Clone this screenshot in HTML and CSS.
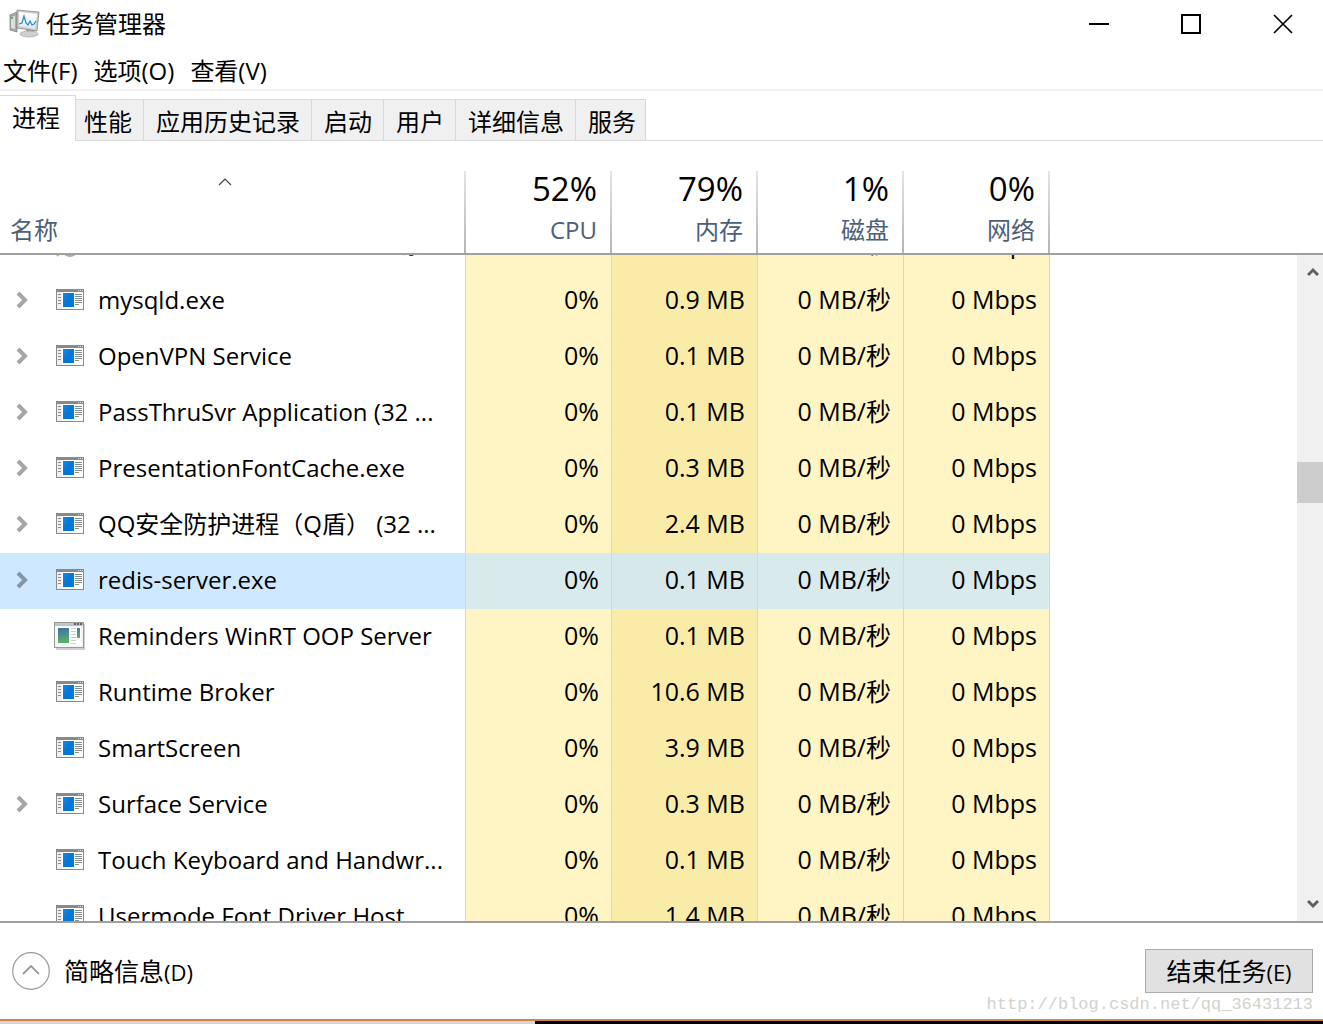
FILE: index.html
```html
<!DOCTYPE html>
<html lang="zh-CN">
<head>
<meta charset="utf-8">
<meta name="viewport" content="width=device-width, initial-scale=1">
<title>任务管理器</title>
<link rel="stylesheet" href="styles.css">
</head>
<body>
<svg class="sprites" aria-hidden="true">
  <defs>
    <linearGradient id="blue" x1="0" y1="0" x2="1" y2="1"><stop offset="0" stop-color="#1a86e0"/><stop offset=".5" stop-color="#0078d7"/></linearGradient>
    <linearGradient id="teal" x1="0" y1="0" x2=".3" y2="1"><stop offset="0" stop-color="#3b6fa5"/><stop offset="1" stop-color="#5cb567"/></linearGradient>
    <linearGradient id="screen" x1="0" y1="0" x2="0" y2="1"><stop offset="0" stop-color="#fff"/><stop offset="1" stop-color="#dfe9f2"/></linearGradient>
  </defs>
  <symbol id="app" viewBox="0 0 28 21">
    <path fill="#868a8d" d="M0 0h28v21H0z"/>
    <path fill="#fff" d="M1 3h26v17H1z"/>
    <path fill="#f0f0f0" d="M1 3h5v17H1z"/>
    <path fill="#ddd" d="M22 1h1v1h-1zM24 1h1v1h-1zM26 1h1v1h-1z"/>
    <path fill="#868a8d" d="M2 5h3v1H2zM2 8h3v1H2zM2 11h3v1H2zM2 14h3v1H2zM19 5h7v1h-7zM19 7h7v1h-7zM19 9h7v1h-7zM19 11h7v1h-7zM19 13h7v1h-7zM19 15h4v1h-4z"/>
    <path fill="url(#blue)" d="M7 4h11v14H7z"/>
  </symbol>
  <symbol id="classic" viewBox="0 0 32 28">
    <path fill="#00000030" d="M2 2h29v26H2z"/>
    <path fill="#999" d="M0 0h30v26H0z"/>
    <path fill="#f4f5f5" d="M1 4h28v21H1z"/>
    <path fill="#bcc3ca" d="M1 1h28v3H1z"/>
    <path fill="#536579" d="M20 1h2v2h-2zM23 1h2v2h-2zM26 1h2v2h-2z"/>
    <path fill="#fff" d="M3 5h24v18H3z"/>
    <path fill="url(#teal)" d="M4 6h11v15H4zM23 6h3v10h-3z"/>
    <path fill="#ccc" d="M17 6h5v1h-5zM17 9h5v1h-5zM17 12h5v1h-5zM17 15h5v1h-5zM17 18h5v1h-5zM17 21h5v1h-5z"/>
  </symbol>
  <symbol id="chevron" viewBox="0 0 12 18"><path d="M2 2l7 7-7 7" fill="none" stroke="currentColor" stroke-width="4"/></symbol>
</svg>

<div class="window">
  <header class="titlebar">
    <svg class="logo" viewBox="0 0 32 30" aria-hidden="true">
      <path d="M1 6l7-3v20l-7-2z" fill="#aaa" stroke="#777" stroke-width=".7"/>
      <path d="M2 8l4-1v13l-4-1z" fill="#ddd"/><path d="M2 8h2v2H2z" fill="#55b848"/>
      <path d="M17 19h7l1 5h-8z" fill="#aaa"/>
      <ellipse cx="20" cy="25" rx="9" ry="3" fill="#d0d0d0" stroke="#999" stroke-width=".6"/>
      <path d="M8 1l22 2-2 19L8 19z" fill="#ccc" stroke="#888" stroke-width=".8"/>
      <path d="M10 3l18 2-2 15-16-3z" fill="url(#screen)"/>
      <path d="M10 15l3-1 2-7 2 7 2 2 2-4 2 4 2-1 2-3" fill="none" stroke="#2588c7" stroke-width="1.2"/>
    </svg>
    <h1 class="title">任务管理器</h1>
    <div class="controls">
      <button class="control" aria-label="最小化"><svg viewBox="0 0 20 20"><path d="M0 9h20v2H0z"/></svg></button>
      <button class="control" aria-label="最大化"><svg viewBox="0 0 20 20"><path d="M1 1h18v18H1z" fill="none" stroke="#000" stroke-width="2"/></svg></button>
      <button class="control" aria-label="关闭"><svg viewBox="0 0 20 20"><path d="M1 1l18 18M19 1L1 19" stroke="#000" stroke-width="1.7"/></svg></button>
    </div>
  </header>

  <nav class="menu">
    <button>文件(F)</button><button>选项(O)</button><button>查看(V)</button>
  </nav>

  <div class="tabs" role="tablist">
    <button class="tab active" role="tab" aria-selected="true">进程</button>
    <button class="tab" role="tab">性能</button>
    <button class="tab" role="tab">应用历史记录</button>
    <button class="tab" role="tab">启动</button>
    <button class="tab" role="tab">用户</button>
    <button class="tab" role="tab">详细信息</button>
    <button class="tab" role="tab">服务</button>
  </div>

  <main class="processes">
    <table class="grid head">
      <colgroup><col class="col-name"><col><col><col><col></colgroup>
      <thead><tr>
        <th class="sorted"><svg class="sort" viewBox="0 0 14 8" aria-hidden="true"><path d="M1 7l6-6 6 6" fill="none" stroke="#444" stroke-width="1.2"/></svg><span class="label">名称</span></th>
        <th><span class="total">52%</span><span class="label">CPU</span></th>
        <th><span class="total">79%</span><span class="label">内存</span></th>
        <th><span class="total">1%</span><span class="label">磁盘</span></th>
        <th><span class="total">0%</span><span class="label">网络</span></th>
      </tr></thead>
    </table>
    <div class="viewport">
      <div class="scrolled">
        <table class="grid body">
          <colgroup><col class="col-name"><col><col><col><col></colgroup>
          <tbody>
            <tr><td><div class="name"><span class="toggle"></span><svg class="icon classic" viewBox="0 0 32 28"><ellipse cx="16" cy="21" rx="7" ry="6" fill="#aaa"/><path d="M3 26l5-5" stroke="#aaa" stroke-width="2"/></svg><span class="text">Microsoft Windows Search 索...</span></div></td><td>0%</td><td>0.9 MB</td><td>0 MB/秒</td><td>0 Mbps</td></tr>
            <tr><td><div class="name"><button class="toggle" aria-label="展开"><svg><use href="#chevron"/></svg></button><svg class="icon"><use href="#app"/></svg><span class="text">mysqld.exe</span></div></td><td>0%</td><td>0.9 MB</td><td>0 MB/秒</td><td>0 Mbps</td></tr>
            <tr><td><div class="name"><button class="toggle" aria-label="展开"><svg><use href="#chevron"/></svg></button><svg class="icon"><use href="#app"/></svg><span class="text">OpenVPN Service</span></div></td><td>0%</td><td>0.1 MB</td><td>0 MB/秒</td><td>0 Mbps</td></tr>
            <tr><td><div class="name"><button class="toggle" aria-label="展开"><svg><use href="#chevron"/></svg></button><svg class="icon"><use href="#app"/></svg><span class="text">PassThruSvr Application (32 ...</span></div></td><td>0%</td><td>0.1 MB</td><td>0 MB/秒</td><td>0 Mbps</td></tr>
            <tr><td><div class="name"><button class="toggle" aria-label="展开"><svg><use href="#chevron"/></svg></button><svg class="icon"><use href="#app"/></svg><span class="text">PresentationFontCache.exe</span></div></td><td>0%</td><td>0.3 MB</td><td>0 MB/秒</td><td>0 Mbps</td></tr>
            <tr><td><div class="name"><button class="toggle" aria-label="展开"><svg><use href="#chevron"/></svg></button><svg class="icon"><use href="#app"/></svg><span class="text">QQ安全防护进程（Q盾） (32 ...</span></div></td><td>0%</td><td>2.4 MB</td><td>0 MB/秒</td><td>0 Mbps</td></tr>
            <tr class="selected"><td><div class="name"><button class="toggle" aria-label="展开"><svg><use href="#chevron"/></svg></button><svg class="icon"><use href="#app"/></svg><span class="text">redis-server.exe</span></div></td><td>0%</td><td>0.1 MB</td><td>0 MB/秒</td><td>0 Mbps</td></tr>
            <tr><td><div class="name"><span class="toggle"></span><svg class="icon classic"><use href="#classic"/></svg><span class="text">Reminders WinRT OOP Server</span></div></td><td>0%</td><td>0.1 MB</td><td>0 MB/秒</td><td>0 Mbps</td></tr>
            <tr><td><div class="name"><span class="toggle"></span><svg class="icon"><use href="#app"/></svg><span class="text">Runtime Broker</span></div></td><td>0%</td><td>10.6 MB</td><td>0 MB/秒</td><td>0 Mbps</td></tr>
            <tr><td><div class="name"><span class="toggle"></span><svg class="icon"><use href="#app"/></svg><span class="text">SmartScreen</span></div></td><td>0%</td><td>3.9 MB</td><td>0 MB/秒</td><td>0 Mbps</td></tr>
            <tr><td><div class="name"><button class="toggle" aria-label="展开"><svg><use href="#chevron"/></svg></button><svg class="icon"><use href="#app"/></svg><span class="text">Surface Service</span></div></td><td>0%</td><td>0.3 MB</td><td>0 MB/秒</td><td>0 Mbps</td></tr>
            <tr><td><div class="name"><span class="toggle"></span><svg class="icon"><use href="#app"/></svg><span class="text">Touch Keyboard and Handwr...</span></div></td><td>0%</td><td>0.1 MB</td><td>0 MB/秒</td><td>0 Mbps</td></tr>
            <tr><td><div class="name"><span class="toggle"></span><svg class="icon"><use href="#app"/></svg><span class="text">Usermode Font Driver Host</span></div></td><td>0%</td><td>1.4 MB</td><td>0 MB/秒</td><td>0 Mbps</td></tr>
          </tbody>
        </table>
      </div>
      <div class="scrollbar">
        <button class="arrow" aria-label="向上滚动"><svg viewBox="0 0 12 10"><path d="M1 8l5-5 5 5" fill="none" stroke="#606060" stroke-width="3"/></svg></button>
        <div class="track"><div class="above"></div><div class="thumb"></div><div class="below"></div></div>
        <button class="arrow" aria-label="向下滚动"><svg viewBox="0 0 12 10"><path d="M1 2l5 5 5-5" fill="none" stroke="#606060" stroke-width="3"/></svg></button>
      </div>
    </div>
  </main>

  <footer class="footer">
    <button class="fewer"><svg viewBox="0 0 38 38" aria-hidden="true"><circle cx="19" cy="19" r="18.3" fill="none" stroke="#999" stroke-width="1.2"/><path d="M11 22l8-8 8 8" fill="none" stroke="#999" stroke-width="1.8"/></svg><span>简略信息<span class="key">(D)</span></span></button>
    <button class="end-task">结束任务<span class="key">(E)</span></button>
    <span class="watermark">http://blog.csdn.net/qq_36431213</span>
  </footer>
</div>
<div class="desktop"><div class="light"></div><div class="dark"></div></div>
</body>
</html>
```
FILE: styles.css
```css
* { box-sizing: border-box; }

body {
  margin: 0;
  height: 100vh;
  display: flex;
  flex-direction: column;
  overflow: hidden;
  background: #fff;
  color: #000;
  font: 24px/32px "Open Sans", "Noto Sans CJK SC", sans-serif;
}

button {
  margin: 0;
  padding: 0;
  border: 0;
  background: none;
  color: inherit;
  font: inherit;
}

svg { display: block; }
.sprites { position: absolute; width: 0; height: 0; }

.window {
  flex: 1;
  min-height: 0;
  display: flex;
  flex-direction: column;
  border-bottom: 2px solid #cd854c;
}

/* Title bar and menu */
.titlebar { display: flex; align-items: center; height: 48px; padding-left: 9px; }
.logo { width: 32px; height: 30px; margin-right: 5px; }
.title { flex: 1; margin: 0; font-size: 24px; font-weight: 400; }
.controls { display: flex; }
.control { display: grid; place-items: center; width: 92px; height: 46px; }
.control:last-child { width: 80px; margin-left: 6px; }
.control svg { width: 20px; height: 20px; }

.menu {
  display: flex;
  gap: 16px;
  height: 43px;
  padding: 7px 3px 0;
  border-bottom: 2px solid #f0f0f0;
}
.menu button { height: 32px; }

/* Tabs */
.tabs {
  display: flex;
  align-items: flex-end;
  height: 50px;
  border-bottom: 1px solid #d9d9d9;
}
.tab {
  height: 41px;
  padding: 3px 11px 0 12px;
  border: 1px solid #d9d9d9;
  border-left: 0;
  border-bottom: 0;
  background: #f0f0f0;
}
.tab:last-child { padding-right: 9px; }
.tab.active {
  position: relative;
  height: 46px;
  margin: 0 -4px -1px 0;
  padding: 0 15px 2px 12px;
  background: #fff;
}

/* Process list */
.processes { flex: 1; min-height: 0; display: flex; flex-direction: column; }
.grid { table-layout: fixed; width: 1050px; border-collapse: separate; border-spacing: 0; }
.col-name { width: 466px; }

.head { margin-top: 30px; }
.head th {
  height: 82px;
  padding: 0 13px 7px 0;
  border-right: 2px solid;
  border-image: linear-gradient(#e5e5e5, #b4b4b4) 1;
  text-align: right;
  vertical-align: bottom;
  font-weight: 400;
}
.head .sorted { padding: 0 0 7px 10px; text-align: left; }
.total { display: block; font-size: 33px; line-height: 36px; }
.label { display: block; margin-top: 7px; line-height: 32px; color: #4c607a; }
.sort { width: 14px; height: 8px; margin: 0 auto 28px 208px; }

.viewport {
  flex: 1;
  min-height: 0;
  display: flex;
  border-top: 2px solid #a0a0a0;
  border-bottom: 2px solid #a0a0a0;
}
.scrolled { flex: 1; overflow: hidden; }
.body { margin-top: -38px; }
.body td {
  height: 56px;
  padding: 0 12px 4px 0;
  border-right: 1px solid #e8d5a0;
  background: #fff4c4;
  text-align: right;
  white-space: nowrap;
  font-size: 25px;
}
.body td:nth-child(3) { background: #f9eca8; }
.body td:first-child { padding: 0 0 3px; background: #fff; font-size: 24px; }
.body .selected td { background: #d9eaed; border-color: #c8dde0; }
.body .selected td:nth-child(3) { background: #d6e8e9; }
.body .selected td:first-child { background: #cde8ff; }

.name { display: flex; align-items: center; text-align: left; }
.toggle { width: 40px; margin-left: 16px; color: #a6a6a6; }
.toggle svg { width: 12px; height: 18px; }
.selected .toggle { color: #8496a6; }
.icon { width: 28px; height: 21px; margin-right: 14px; }
.icon.classic { width: 32px; height: 28px; margin: 0 12px 0 -2px; }
.text { white-space: pre; }

.scrollbar { display: flex; flex-direction: column; width: 26px; background: #f0f0f0; }
.arrow { display: grid; place-items: center; height: 34px; padding-left: 6px; }
.arrow svg { width: 12px; height: 10px; }
.track { flex: 1; display: flex; flex-direction: column; }
.above { flex: 173; }
.thumb { height: 41px; background: #cdcdcd; }
.below { flex: 384; }

/* Footer */
.footer {
  position: relative;
  display: flex;
  align-items: center;
  justify-content: space-between;
  height: 96px;
  padding: 0 10px 0 12px;
}
.fewer { display: flex; align-items: center; font-size: 25px; }
.fewer svg { width: 38px; height: 38px; margin-right: 14px; }
.key { font-size: 22px; }
.end-task {
  width: 168px;
  height: 44px;
  border: 1px solid #adadad;
  background: #e1e1e1;
  font-size: 25px;
  line-height: 40px;
}
.watermark {
  position: absolute;
  right: 10px;
  bottom: 3px;
  color: #d2d2cc;
  font: 17px/22px "Liberation Mono", monospace;
}

.desktop { display: flex; height: 3px; }
.light { width: 535px; background: #d6d6d6; }
.dark { flex: 1; background: #000; }
```
